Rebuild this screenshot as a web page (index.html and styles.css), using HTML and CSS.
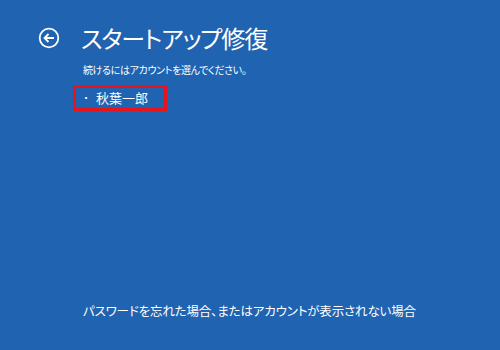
FILE: index.html
```html
<!DOCTYPE html>
<html lang="ja">
<head>
<meta charset="utf-8">
<link rel="stylesheet" href="styles.css">
</head>
<body>
<div class="screen">
  <header class="head">
    <svg class="back" width="22" height="22" viewBox="0 0 22 22">
      <circle cx="11" cy="11" r="9.3" fill="none" stroke="#fff" stroke-width="1.8"/>
      <path d="M16 11H6.5M10.5 7L6.5 11L10.5 15" fill="none" stroke="#fff" stroke-width="1.8"/>
    </svg>
    <h1 class="title">スタートアップ修復</h1>
  </header>
  <main class="content">
    <p class="prompt">続けるにはアカウントを選んでください。</p>
    <div class="account"><span class="dot">・</span>秋葉一郎</div>
  </main>
  <footer class="foot">パスワードを忘れた場合、またはアカウントが表示されない場合</footer>
</div>
</body>
</html>
```
FILE: styles.css
```css
html, body { margin: 0; padding: 0; }
body {
  width: 500px;
  height: 350px;
  background: #1f63b1;
  color: #fff;
  font-family: "Noto Sans CJK JP", "Noto Sans", sans-serif;
  font-feature-settings: "palt";
  overflow: hidden;
}
.screen {
  height: 350px;
  display: flex;
  flex-direction: column;
}
.head {
  display: flex;
  align-items: center;
  padding: 20px 0 0 38px;
  height: 36px;
}
.back { flex: none; }
.title {
  margin: 0 0 0 21px;
  font-size: 24px;
  font-weight: 400;
  line-height: 36px;
  letter-spacing: -1.1px;
}
.content {
  padding-left: 73px;
  flex: 1;
}
.prompt {
  margin: 7px 0 0 10px;
  font-size: 10px;
  line-height: 14px;
  letter-spacing: -0.35px;
}
.account {
  margin-top: 8px;
  width: 88px;
  height: 20px;
  border: 3px solid #e8141c;
  font-size: 13px;
  line-height: 20px;
  display: flex;
  align-items: center;
}
.dot { width: 20px; text-align: center; font-size: 10px; }
.foot {
  padding: 0 0 30px 83px;
  font-size: 12.5px;
  line-height: 18px;
  letter-spacing: -0.15px;
}
```
